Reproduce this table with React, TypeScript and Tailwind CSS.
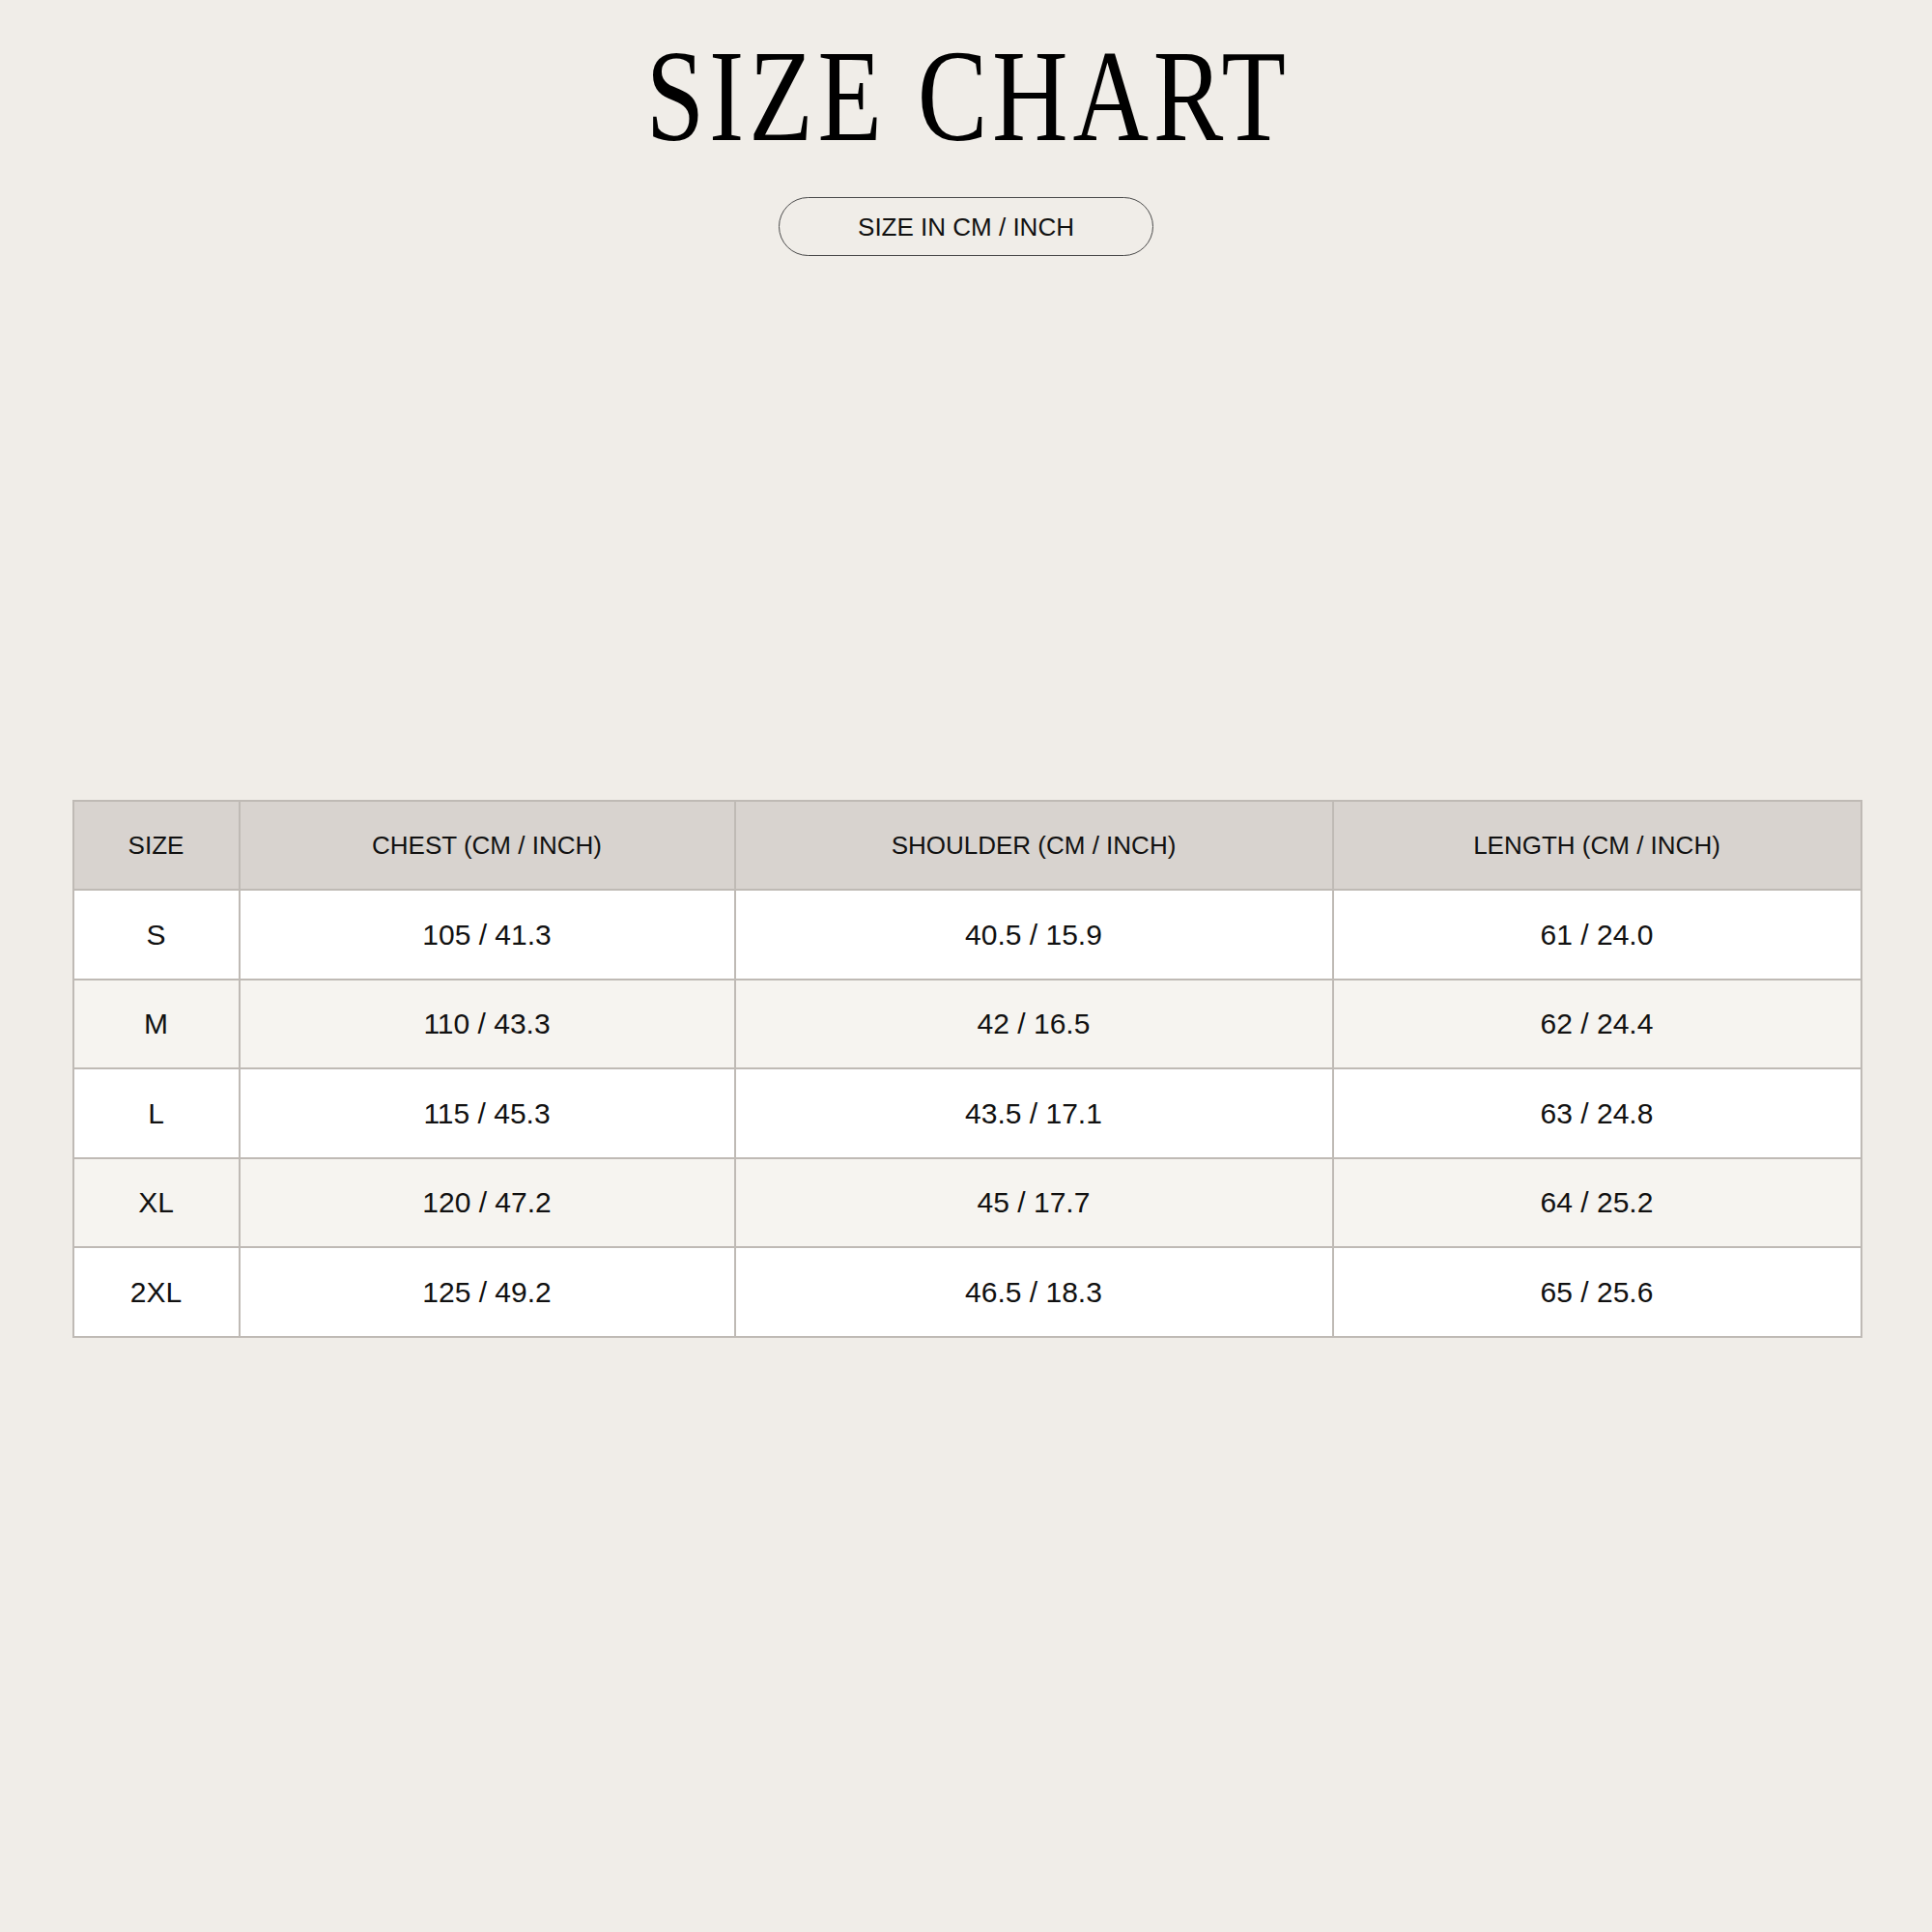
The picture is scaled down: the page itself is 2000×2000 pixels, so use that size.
import React from "react";

const rows = [
  { size: "S", chest: "105 / 41.3", shoulder: "40.5 / 15.9", length: "61 / 24.0" },
  { size: "M", chest: "110 / 43.3", shoulder: "42 / 16.5", length: "62 / 24.4" },
  { size: "L", chest: "115 / 45.3", shoulder: "43.5 / 17.1", length: "63 / 24.8" },
  { size: "XL", chest: "120 / 47.2", shoulder: "45 / 17.7", length: "64 / 25.2" },
  { size: "2XL", chest: "125 / 49.2", shoulder: "46.5 / 18.3", length: "65 / 25.6" },
];

const App: React.FC = () => {
  return (
    <div className="w-[2000px] h-[2000px] bg-[#f0ede8] flex flex-col items-center font-['Liberation_Sans',Arial,sans-serif] text-[#111]">
      {/* Title */}
      <h1 className="mt-[31px] h-[136px] text-[136px] leading-none font-['Liberation_Serif','Times_New_Roman',serif] font-normal tracking-[6px] pl-[6px] scale-x-[0.8] text-black">
        SIZE CHART
      </h1>

      {/* Unit pill */}
      <div className="mt-[37px] w-[388px] h-[61px] rounded-full border border-[#4a4a4a] flex items-center justify-center text-[26px] leading-none">
        SIZE IN CM / INCH
      </div>

      {/* Table */}
      <div className="mt-[563px] w-[1851px]">
        <table className="w-full table-fixed border-collapse border-2 border-[#bfbab5]">
          <colgroup>
            <col className="w-[172px]" />
            <col className="w-[513px]" />
            <col className="w-[619px]" />
            <col className="w-[547px]" />
          </colgroup>
          <thead>
            <tr className="h-[92px] bg-[#d8d3cf] text-[26px]">
              <th className="border-2 border-[#bfbab5] font-normal">SIZE</th>
              <th className="border-2 border-[#bfbab5] font-normal">CHEST (CM / INCH)</th>
              <th className="border-2 border-[#bfbab5] font-normal">SHOULDER (CM / INCH)</th>
              <th className="border-2 border-[#bfbab5] font-normal">LENGTH (CM / INCH)</th>
            </tr>
          </thead>
          <tbody>
            {rows.map((r, i) => (
              <tr key={r.size} className={`h-[92.5px] text-[30px] ${i % 2 === 1 ? "bg-[#f6f4f0]" : "bg-white"}`}>
                <td className="border-2 border-[#bfbab5] text-center">{r.size}</td>
                <td className="border-2 border-[#bfbab5] text-center">{r.chest}</td>
                <td className="border-2 border-[#bfbab5] text-center">{r.shoulder}</td>
                <td className="border-2 border-[#bfbab5] text-center">{r.length}</td>
              </tr>
            ))}
          </tbody>
        </table>
      </div>
    </div>
  );
};

export default App;
